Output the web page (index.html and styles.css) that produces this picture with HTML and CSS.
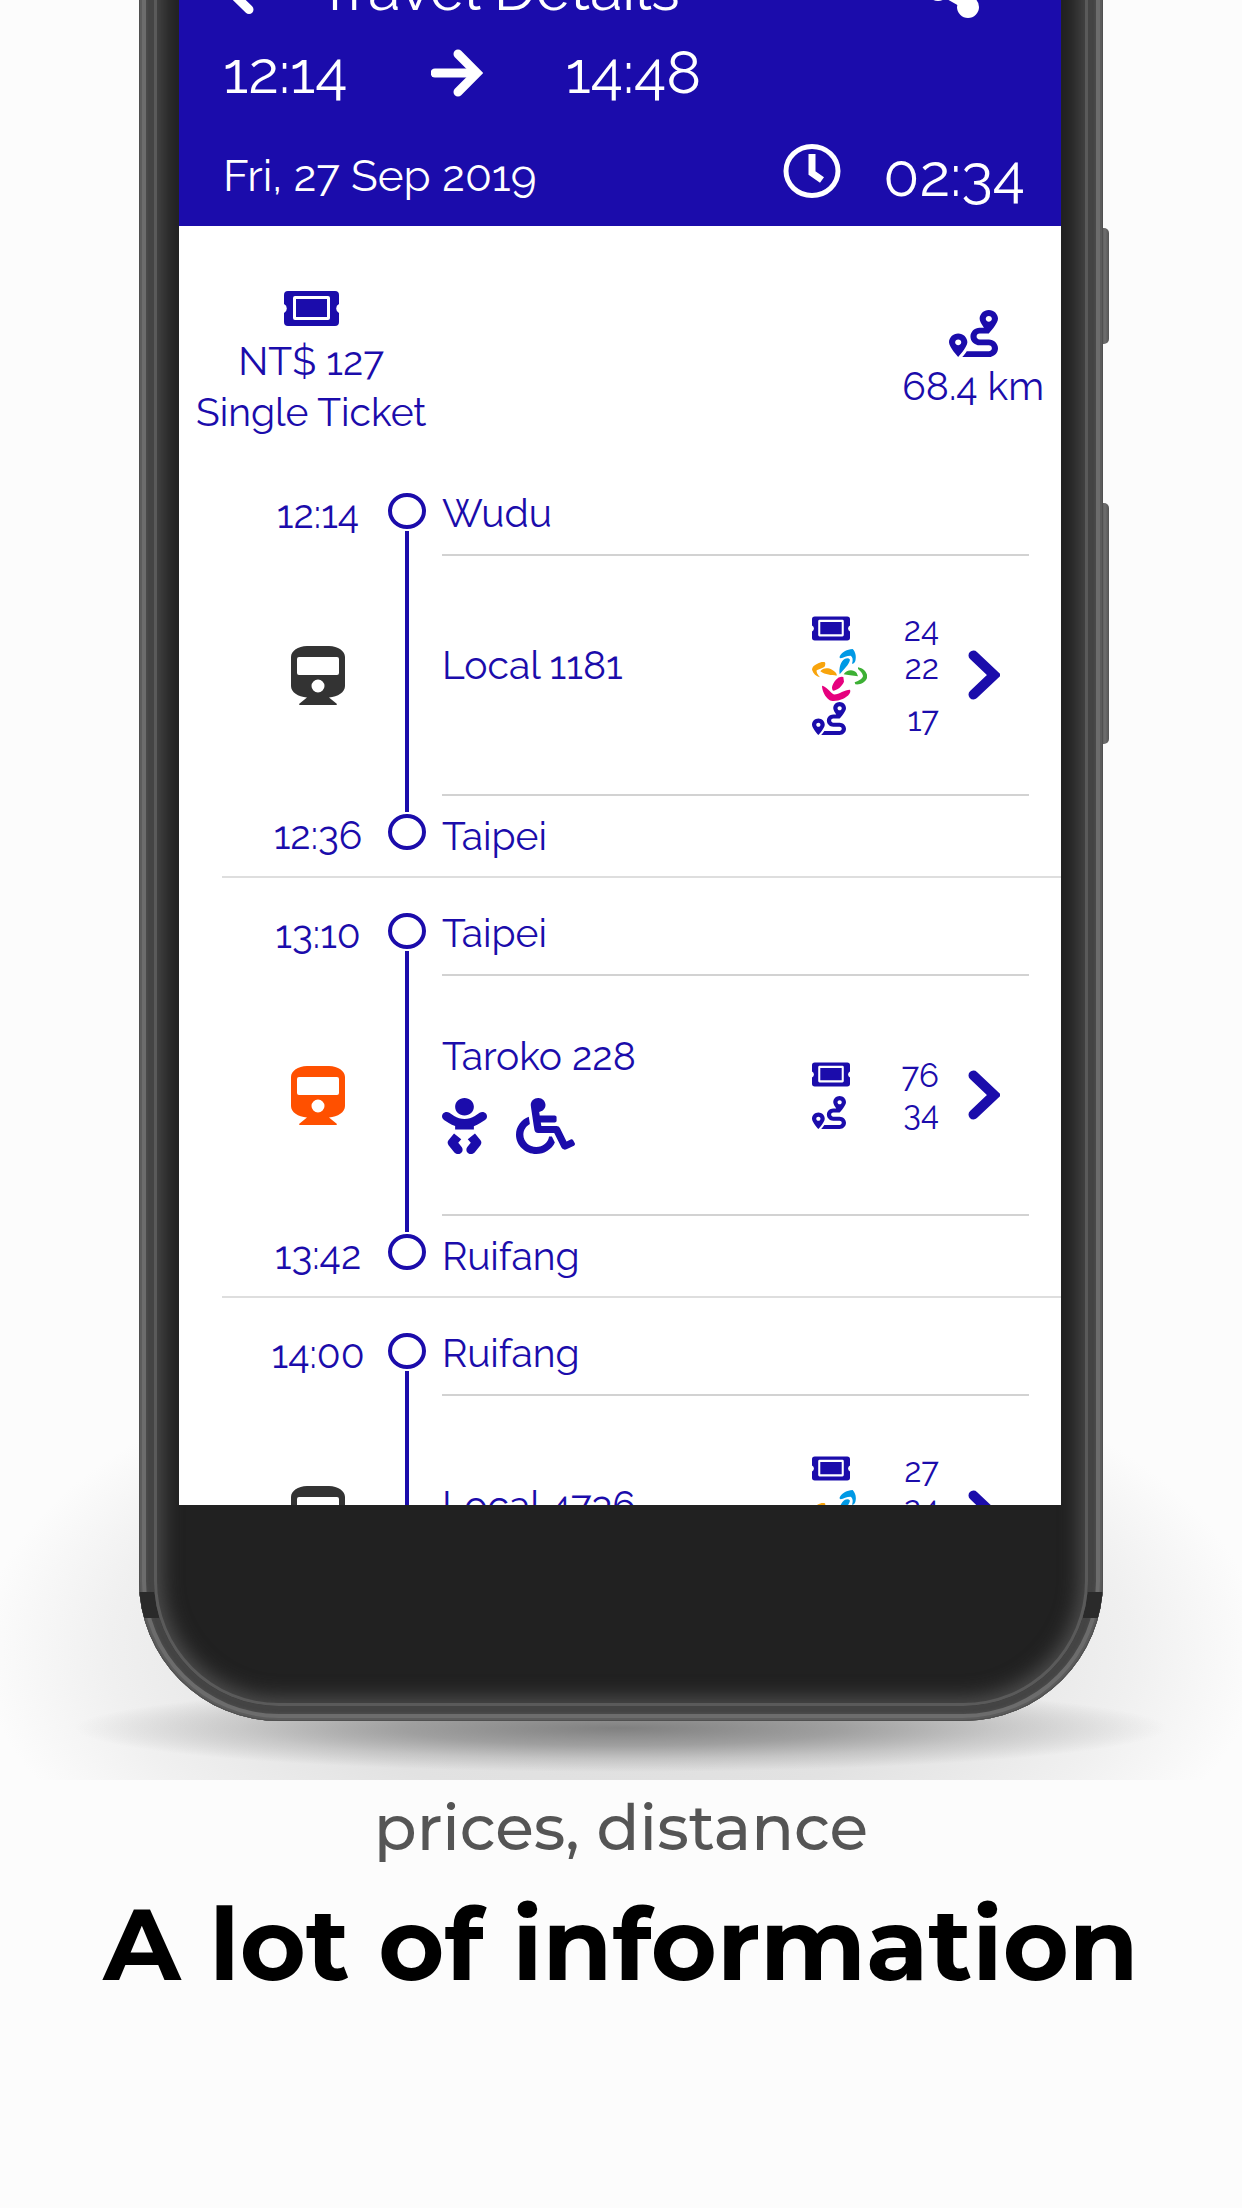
FILE: index.html
```html
<!DOCTYPE html>
<html lang="en">
<head>
<meta charset="utf-8">
<meta name="viewport" content="width=device-width, initial-scale=1">
<title>Travel Details</title>
<link rel="stylesheet" href="styles.css">
</head>
<body>
<svg class="defs" aria-hidden="true">
  <symbol id="ticket" viewBox="0 0 55 35">
    <path fill-rule="evenodd" d="M4 0H51a4 4 0 0 1 4 4V13a5 5 0 0 0 0 9V31a4 4 0 0 1-4 4H4a4 4 0 0 1-4-4V22a5 5 0 0 0 0-9V4a4 4 0 0 1 4-4ZM11 5a2 2 0 0 0-2 2V27a2 2 0 0 0 2 2H44a2 2 0 0 0 2-2V7a2 2 0 0 0-2-2ZM12 8H43V26H12Z"/>
  </symbol>
  <symbol id="route" viewBox="0 0 512 512" preserveAspectRatio="none">
    <path d="M416 320h-96c-17.600 0-32-14.400-32-32s14.400-32 32-32h96s96-107 96-160-43-96-96-96-96 43-96 96c0 25.500 22.200 63.400 45.300 96H320c-52.900 0-96 43.100-96 96s43.100 96 96 96h96c17.600 0 32 14.400 32 32s-14.400 32-32 32H185.500c-16 24.800-33.800 47.700-47.300 64H416c52.900 0 96-43.100 96-96s-43.100-96-96-96zm0-256c17.700 0 32 14.300 32 32s-14.300 32-32 32-32-14.300-32-32 14.300-32 32-32zM96 256c-53 0-96 43-96 96s96 160 96 160 96-107 96-160-43-96-96-96zm0 128c-17.700 0-32-14.300-32-32s14.300-32 32-32 32 14.300 32 32-14.300 32-32 32z"/>
  </symbol>
  <symbol id="train" viewBox="0 0 54 59">
    <path fill-rule="evenodd" d="M16 0H38C47 0 54 5 54 11V40C54 46 47 51 38 51.500L46 58Q46 59 45 59H9Q8 59 8 58L16 51.500C7 51 0 46 0 40V11C0 5 7 0 16 0ZM8 11Q6 11 6 13V27Q6 29 8 29H46Q48 29 48 27V13Q48 11 46 11ZM27 33.500a6.500 6.500 0 1 0 0 13a6.500 6.500 0 1 0 0-13Z"/>
  </symbol>
  <symbol id="card" viewBox="0 0 165 156">
    <path fill="#0099e5" d="M84 20C92 8 104 2 122 0C130 8 134 22 130 36C127 43 124 45 120 44C124 32 122 24 116 20C104 20 94 26 86 28C82 26 82 24 84 20ZM83 76C80 56 86 36 99 29Q110 26 114 32C110 48 98 58 83 76Z"/>
    <path fill="#f8a40c" d="M39 40C34 38 26 38 16 44C6 48 0 54 0 62C4 74 12 82 24 85C18 78 12 70 14 64C24 58 36 58 39 50Q41 44 39 40ZM25 67C32 56 48 56 60 62C70 68 76 74 74 80C58 78 40 78 25 67Z"/>
    <path fill="#3db035" d="M95 76C104 62 124 60 134 72L138 82C122 80 106 78 95 76ZM138 55C156 58 166 72 166 84C162 100 146 108 130 106L128 100C138 96 152 90 153 81C152 72 142 64 138 60Z"/>
    <path fill="#e6007e" d="M94 84Q82 80 72 92C62 104 56 116 63 125C76 124 90 112 96 98ZM30 110C38 110 48 122 64 136C80 138 96 122 114 122C118 132 108 142 92 150C78 156 60 158 52 153C40 144 30 126 30 110Z"/>
  </symbol>
  <symbol id="chevron" viewBox="0 0 32 50">
    <path d="M5.500 5.500L26 25L5.500 44.500" fill="none" stroke="currentColor" stroke-width="10" stroke-linecap="round"/>
  </symbol>
  <symbol id="baby" viewBox="0 0 384 512" preserveAspectRatio="none">
    <path d="M192 160c44.200 0 80-35.800 80-80S236.200 0 192 0s-80 35.800-80 80 35.800 80 80 80zm-53.400 248.800l25.600-32-61.500-51.200L56.800 383c-11.400 14.200-11.700 34.400-.8 49l48 64c7.900 10.500 19.900 16 32 16 8.300 0 16.800-2.600 24-8 17.700-13.200 21.200-38.300 8-56l-29.400-39.200zm142.700-83.200l-61.500 51.200 25.600 32L216 448c-13.200 17.700-9.700 42.800 8 56 7.200 5.400 15.600 8 24 8 12.200 0 24.200-5.500 32-16l48-64c10.900-14.600 10.600-34.800-.8-49l-45.900-57.400zM376.700 145c-12.700-18.100-37.600-22.400-55.700-9.800l-40.600 28.500c-52.700 37-124.200 37-176.800 0L63 135.300C44.900 122.600 20 127 7.300 145-5.400 163.100-1 188 17 200.700l40.600 28.500c17 11.900 35.400 20.900 54.400 27.900V288h160v-30.800c19-7 37.400-16 54.400-27.900l40.600-28.500c18.100-12.800 22.400-37.700 9.700-55.800z"/>
  </symbol>
  <symbol id="wheelchair" viewBox="0 0 512 512" preserveAspectRatio="none">
    <path d="M496.100 385.700l14.200 28.700c3.900 7.900.7 17.500-7.200 21.400l-65.500 32.900c-16 8-35.500 1.200-43.100-15L331.700 320H192c-15.900 0-29.400-11.700-31.700-27.500C126.400 55.300 128.400 70 128 64c0-36.400 30.300-65.600 67-63.900 33.300 1.500 60 28.900 60.900 62.200.9 32.900-23.100 60.400-54.600 65l4.700 32.700H336c8.800 0 16 7.200 16 16v32c0 8.800-7.200 16-16 16H215.200l4.600 32H352a32 32 0 0 1 29 18.400L438.500 396.800l36.200-18.300c7.900-4 17.500-.7 21.400 7.200zM311.400 352h-24.500c-7.800 54.200-54.600 96-110.900 96-61.800 0-112-50.200-112-112 0-41.500 22.700-77.800 56.300-97.200-3.700-25.900-6.800-47.800-9.500-66.300C46 198.500 0 262 0 336c0 97 79 176 176 176 71.900 0 133.800-43.300 161.100-105.200L311.400 352z"/>
  </symbol>
</svg>

<section class="stage">
  <div class="phone">
    <span class="side-button power"></span>
    <span class="side-button volume"></span>
    <div class="frame">
      <div class="glass">
        <div class="screen">
          <header class="header">
            <div class="titlebar">
              <button class="icon-button" aria-label="Back"><svg class="back" viewBox="0 0 32 50"><path d="M26 5.500L6 25L26 44.500"/></svg></button>
              <h2 class="title">Travel Details</h2>
              <button class="icon-button" aria-label="Share"><svg class="share" viewBox="0 0 52 56"><path d="M41 11L11 28L41 45"/><circle cx="41" cy="11" r="11"/><circle cx="11" cy="28" r="11"/><circle cx="41" cy="45" r="11"/></svg></button>
            </div>
            <div class="trip-times">
              <time>12:14</time>
              <svg class="arrow" viewBox="0 0 52 48"><path d="M4 24H42"/><path d="M27 5L46 24L27 43" stroke-linejoin="miter"/></svg>
              <time>14:48</time>
            </div>
            <div class="trip-date">
              <span class="date">Fri, 27 Sep 2019</span>
              <svg class="clock" viewBox="0 0 58 54"><ellipse cx="29" cy="27" rx="26" ry="24.500"/><path d="M29 10V29L39 36"/></svg>
              <time class="duration">02:34</time>
            </div>
          </header>

          <div class="summary">
            <div class="fact">
              <svg class="ticket-large"><use href="#ticket"/></svg>
              <span>NT$ 127</span>
              <span>Single Ticket</span>
            </div>
            <div class="fact distance">
              <svg class="route-large"><use href="#route"/></svg>
              <span>68.4 km</span>
            </div>
          </div>

          <ol class="legs">
            <li class="leg">
              <time class="time">12:14</time>
              <span class="rail"><i class="stop"></i><i class="line"></i><i class="stop"></i></span>
              <span class="station departure">Wudu</span>
              <svg class="train"><use href="#train"/></svg>
              <div class="ride">
                <div class="service"><span>Local 1181</span></div>
                <dl class="costs">
                  <dt><svg class="ticket"><use href="#ticket"/></svg></dt><dd>24</dd>
                  <dt><svg class="card"><use href="#card"/></svg></dt><dd class="card-price">22</dd>
                  <dt><svg class="route"><use href="#route"/></svg></dt><dd>17</dd>
                </dl>
                <button class="icon-button" aria-label="Local 1181 details"><svg class="chevron"><use href="#chevron"/></svg></button>
              </div>
              <time class="time">12:36</time>
              <span class="station arrival">Taipei</span>
            </li>
            <li class="leg">
              <time class="time">13:10</time>
              <span class="rail"><i class="stop"></i><i class="line"></i><i class="stop"></i></span>
              <span class="station departure">Taipei</span>
              <svg class="train express"><use href="#train"/></svg>
              <div class="ride">
                <div class="service equipped">
                  <span>Taroko 228</span>
                  <div class="amenities">
                    <svg class="baby"><use href="#baby"/></svg>
                    <svg class="wheelchair"><use href="#wheelchair"/></svg>
                  </div>
                </div>
                <dl class="costs">
                  <dt><svg class="ticket"><use href="#ticket"/></svg></dt><dd>76</dd>
                  <dt><svg class="route"><use href="#route"/></svg></dt><dd>34</dd>
                </dl>
                <button class="icon-button" aria-label="Taroko 228 details"><svg class="chevron"><use href="#chevron"/></svg></button>
              </div>
              <time class="time">13:42</time>
              <span class="station arrival">Ruifang</span>
            </li>
            <li class="leg">
              <time class="time">14:00</time>
              <span class="rail"><i class="stop"></i><i class="line"></i><i class="stop"></i></span>
              <span class="station departure">Ruifang</span>
              <svg class="train"><use href="#train"/></svg>
              <div class="ride">
                <div class="service"><span>Local 4736</span></div>
                <dl class="costs">
                  <dt><svg class="ticket"><use href="#ticket"/></svg></dt><dd>27</dd>
                  <dt><svg class="card"><use href="#card"/></svg></dt><dd class="card-price">24</dd>
                  <dt><svg class="route"><use href="#route"/></svg></dt><dd></dd>
                </dl>
                <button class="icon-button" aria-label="Local 4736 details"><svg class="chevron"><use href="#chevron"/></svg></button>
              </div>
            </li>
          </ol>
        </div>
      </div>
    </div>
  </div>
</section>

<section class="caption">
  <p class="subtitle">prices, distance</p>
  <h1 class="headline">A lot of information</h1>
</section>
</body>
</html>
```
FILE: styles.css
```css
* { box-sizing: border-box; }

body {
  margin: 0;
  background: #fcfcfc;
  font-family: Raleway, Lato, sans-serif;
  font-size: 39px;
  line-height: 51px;
  font-variant-numeric: oldstyle-nums;
  color: #1b0cab;
}

h1, h2, p, ol, dl, dd { margin: 0; padding: 0; }
.defs { position: absolute; width: 0; height: 0; }
svg { display: block; fill: currentColor; flex: none; }

.icon-button {
  display: flex;
  padding: 0;
  border: 0;
  background: none;
  color: inherit;
}

/* Phone */
.stage {
  position: relative;
  overflow: hidden;
  padding-bottom: 59px;
  background: radial-gradient(ellipse 640px 320px at 50% 1650px, #dcdcdc 0%, #e2e2e2 50%, #f0f0f0 80%, #fcfcfc 100%);
}

.stage::before {
  content: "";
  position: absolute;
  left: 6%;
  right: 6%;
  bottom: 8px;
  height: 88px;
  background: radial-gradient(closest-side, #808080 0%, #8a8a8ac0 40%, #a0a0a070 70%, #c0c0c000 100%);
}

.phone {
  position: relative;
  width: calc(100% - 278px);
  margin: -42px auto 0;
}

.side-button {
  position: absolute;
  right: -6px;
  width: 10px;
  border-radius: 0 5px 5px 0;
  background: linear-gradient(90deg, #4a4a4a, #6e6e6e 60%, #555);
}
.power { top: 270px; height: 116px; }
.volume { top: 545px; height: 241px; }

.frame {
  position: relative;
  overflow: hidden;
  padding: 0 15px 15px;
  border-radius: 0 0 140px 140px;
  background: #444;
  box-shadow: inset 0 0 0 1px #505050, inset 0 0 0 3px #5c5c5c, inset 0 0 0 7px #6c6c6c, inset 0 0 3px 8px #4c4c4c;
}

/* Antenna strips */
.frame::before,
.frame::after {
  content: "";
  position: absolute;
  bottom: 103px;
  width: 20px;
  height: 26px;
  background: #2a2a2a;
}
.frame::before { left: 0; }
.frame::after { right: 0; }

.glass {
  position: relative;
  z-index: 1;
  padding: 0 27px 201px 25px;
  border-radius: 0 0 125px 125px;
  background: #212121;
  box-shadow: inset 0 0 0 3px #5a5a5a, inset 0 0 20px 8px #505050;
}

.screen {
  height: 1547px;
  overflow: hidden;
  background: #fff;
}

/* Header */
.header {
  height: 268px;
  padding: 0 36px 0 44px;
  background: #1b0cab;
  color: #fff;
}

.titlebar { display: flex; align-items: center; height: 64px; }
.title { flex: 1; margin-left: 62px; font-size: 59px; font-weight: 400; line-height: 64px; }
.back { width: 32px; height: 50px; }
.back path { fill: none; stroke: #fff; stroke-width: 9; stroke-linecap: round; }
.share { width: 52px; height: 56px; margin-right: 46px; }
.share path { fill: none; stroke: #fff; stroke-width: 7; }

.trip-times {
  display: flex;
  align-items: center;
  height: 101px;
  font-size: 59px;
}
.arrow { width: 52px; height: 48px; margin: 0 83px; }
.arrow path { fill: none; stroke: #fff; stroke-width: 9; stroke-linecap: round; }

.trip-date { display: flex; align-items: center; height: 96px; }
.date { flex: 1; padding-top: 8px; font-size: 44px; }
.clock { width: 58px; height: 54px; margin-right: 42px; }
.clock ellipse { fill: none; stroke: #fff; stroke-width: 5; }
.clock path { fill: none; stroke: #fff; stroke-width: 7; }
.duration { padding-top: 8px; font-size: 59px; }

/* Price and distance */
.summary {
  display: flex;
  justify-content: space-between;
  align-items: center;
  height: 232px;
  padding: 44px 17px 0 17px;
}
.fact { display: flex; flex-direction: column; align-items: center; }
.distance { padding-bottom: 6px; }
.ticket-large { width: 55px; height: 35px; margin-bottom: 10px; }
.route-large { width: 49px; height: 47px; margin-bottom: 4px; }

/* Legs */
.legs { list-style: none; }

.leg {
  display: grid;
  grid-template-columns: 140px 38px minmax(0, 1fr);
  grid-template-rows: 98px 238px 82px;
  margin-left: 43px;
  padding: 0 32px 0 26px;
  border-bottom: 2px solid #dedede;
}

.time { align-self: center; text-align: center; }
.departure, .time:first-child { padding-top: 14px; }

.rail {
  grid-row: 1 / 4;
  grid-column: 2;
  display: flex;
  flex-direction: column;
  align-items: center;
  gap: 2px;
  padding: 35px 0 26px;
}
.stop { width: 38px; height: 36px; border: 4px solid #1b0cab; border-radius: 50%; }
.line { flex: 1; width: 4px; background: #1b0cab; }

.station { grid-column: 3; margin-left: 16px; display: flex; align-items: center; }
.departure { border-bottom: 2px solid #d2d2d2; }
.arrival { border-top: 2px solid #d2d2d2; }

.train { width: 54px; height: 59px; place-self: center; color: #333; }
.express { color: #ff5000; }

.ride {
  grid-column: 3;
  display: flex;
  align-items: center;
  margin-left: 16px;
  padding-right: 29px;
}
.service { flex: 1; padding-bottom: 20px; }
.equipped { padding-bottom: 6px; }
.amenities { display: flex; gap: 29px; margin-top: 16px; }
.baby { width: 45px; height: 56px; }
.wheelchair { width: 59px; height: 56px; }

.costs {
  display: grid;
  grid-template-columns: 60px 67px;
  align-items: center;
  margin-right: 29px;
  font-size: 33px;
  line-height: 38px;
}
.costs dd { text-align: right; }
.costs .card-price { align-self: start; }
.ticket { width: 38px; height: 25px; margin-bottom: 4px; }
.card { width: 55px; height: 52px; }
.route { width: 34px; height: 33px; margin-bottom: 4px; }
.chevron { width: 32px; height: 50px; }

/* Caption */
.caption {
  padding: 8px 16px 0;
  text-align: center;
  font-family: Montserrat, Inter, sans-serif;
}
.subtitle { font-size: 63px; line-height: 80px; font-weight: 500; color: #555; }
.headline { margin-top: 16px; font-size: 101px; line-height: 120px; font-weight: 700; color: #000; }
```
